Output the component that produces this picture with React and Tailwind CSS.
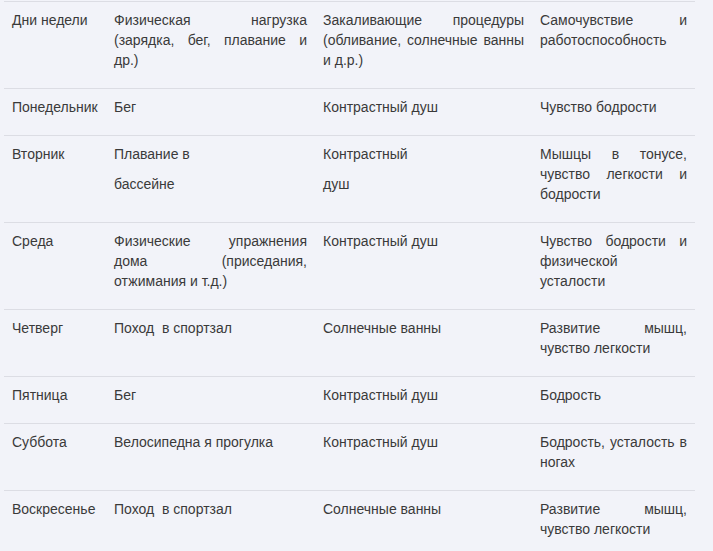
const rows = [
  {
    day: "Дни недели",
    load: ["Физическая нагрузка (зарядка, бег, плавание и др.)"],
    proc: ["Закаливающие процедуры (обливание, солнечные ванны и д.р.)"],
    feel: ["Самочувствие и работоспособность"],
  },
  { day: "Понедельник", load: ["Бег"], proc: ["Контрастный душ"], feel: ["Чувство бодрости"] },
  {
    day: "Вторник",
    load: ["Плавание в", "бассейне"],
    proc: ["Контрастный", "душ"],
    feel: ["Мышцы в тонусе, чувство легкости и бодрости"],
  },
  {
    day: "Среда",
    load: ["Физические упражнения дома (приседания, отжимания и т.д.)"],
    proc: ["Контрастный душ"],
    feel: ["Чувство бодрости и физической", "усталости"],
  },
  {
    day: "Четверг",
    load: ["Поход\u00a0 в спортзал"],
    proc: ["Солнечные ванны"],
    feel: ["Развитие мышц, чувство легкости"],
  },
  { day: "Пятница", load: ["Бег"], proc: ["Контрастный душ"], feel: ["Бодрость"] },
  {
    day: "Суббота",
    load: ["Велосипедна я прогулка"],
    proc: ["Контрастный душ"],
    feel: ["Бодрость, усталость в ногах"],
  },
  {
    day: "Воскресенье",
    load: ["Поход\u00a0 в спортзал"],
    proc: ["Солнечные ванны"],
    feel: ["Развитие мышц, чувство легкости"],
  },
];

function Paras({ items }) {
  return (
    <div className="flex flex-col gap-[10px]">
      {items.map((t, i) => (
        <p key={i}>{t}</p>
      ))}
    </div>
  );
}

// lines inside one paragraph, broken by hand
function Lines({ items }) {
  return (
    <p>
      {items.map((t, i) => (
        <span key={i}>
          {i > 0 && <br />}
          {t}
        </span>
      ))}
    </p>
  );
}

export default function App() {
  return (
    <div
      className="min-h-screen bg-[#f2f3f9] pt-px pl-1 text-[14px] leading-5 text-[#3a3a3a]"
      style={{ fontFamily: '"Liberation Sans", Arial, sans-serif' }}
    >
      <table className="w-[691px] table-fixed border-collapse">
        <colgroup>
          <col className="w-[102px]" />
          <col className="w-[209px]" />
          <col className="w-[217px]" />
          <col className="w-[163px]" />
        </colgroup>
        <tbody>
          {rows.map((r, i) => (
            <tr key={i} className="border-t border-[#dcdde4] align-top">
              <td className="px-2 pt-2 pb-[18px]">{r.day}</td>
              <td className="px-2 pt-2 pb-[18px] text-justify">
                <Paras items={r.load} />
              </td>
              <td className="px-2 pt-2 pb-[18px] text-justify">
                <Paras items={r.proc} />
              </td>
              <td className="px-2 pt-2 pb-[18px] text-justify">
                <Lines items={r.feel} />
              </td>
            </tr>
          ))}
        </tbody>
      </table>
    </div>
  );
}
